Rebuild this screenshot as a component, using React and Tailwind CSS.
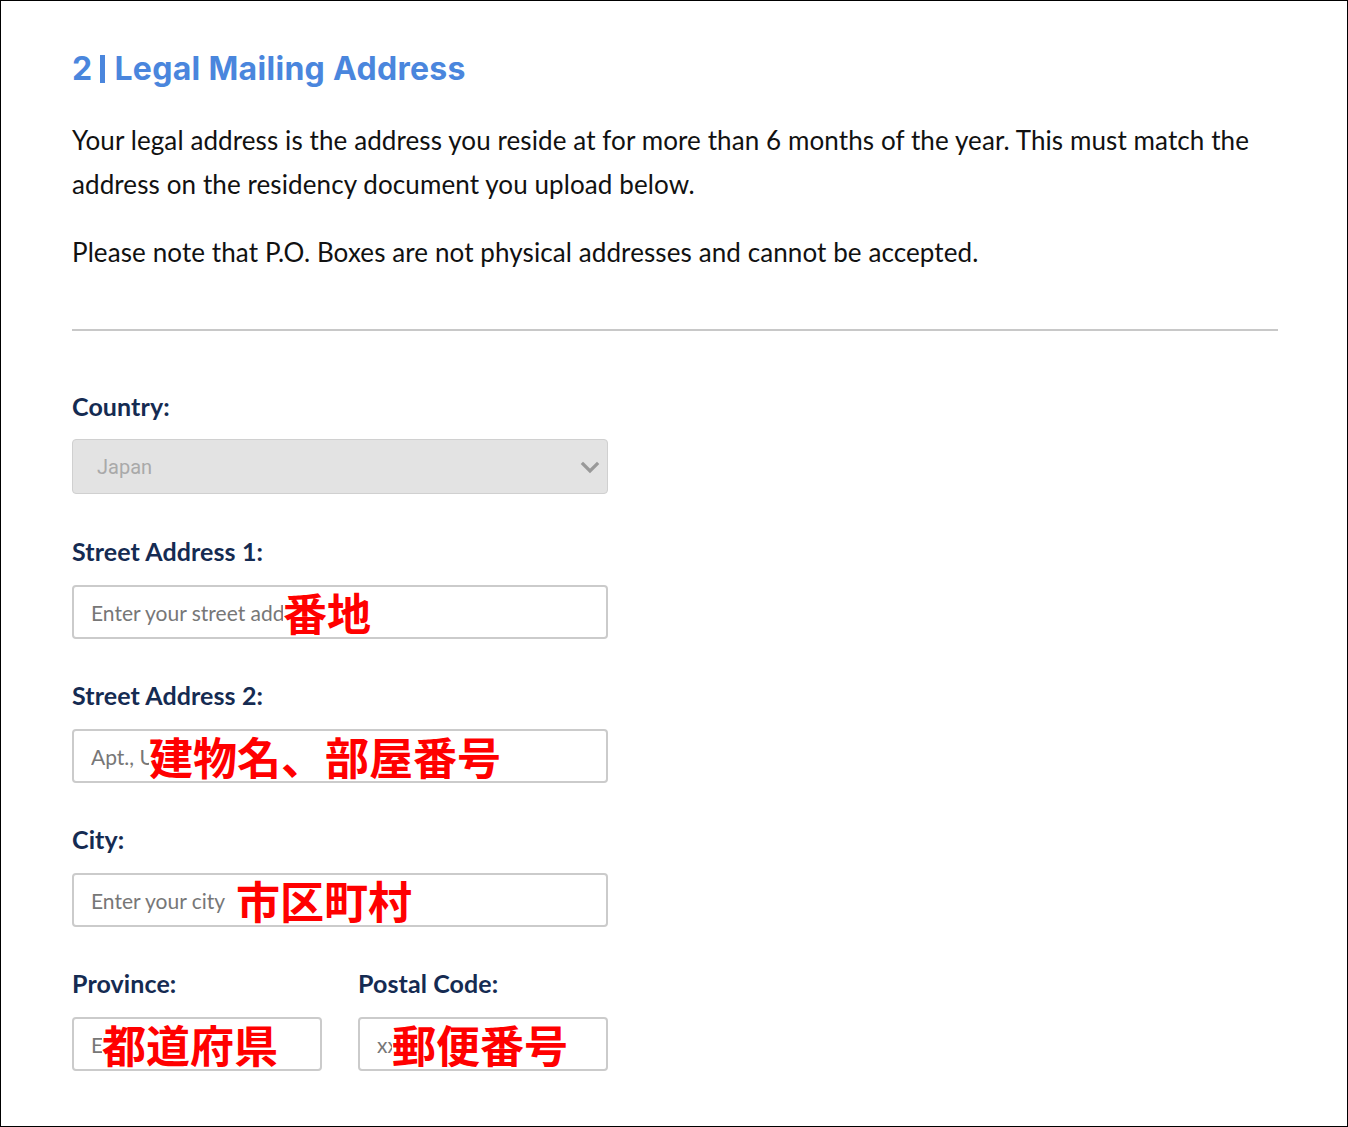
import React from "react";

const lato = { fontFamily: "Lato, 'Noto Sans', sans-serif" };

function Label({ children }) {
  return (
    <div className="text-[25px] font-bold leading-[28px] tracking-[0.1px] text-[#152b52]" style={lato}>
      {children}
    </div>
  );
}

function Overlay({ left, children }) {
  return (
    <span
      className="absolute top-1/2 -translate-y-1/2 bg-white text-[44px] font-bold leading-[48px] text-[#ff0000]"
      style={{ left, fontFamily: "'Noto Sans CJK JP', sans-serif" }}
    >
      {children}
    </span>
  );
}

function TextInput({ placeholder, overlay, overlayLeft, widthClass = "w-[536px]" }) {
  return (
    <div className={`relative ${widthClass} h-[54px]`}>
      <input
        type="text"
        placeholder={placeholder}
        className="box-border h-full w-full rounded-[4px] border-2 border-[#cbcbcb] bg-white px-[17px] text-[21px] text-[#333] outline-none placeholder:text-[#777]"
        style={lato}
      />
      {overlay && <Overlay left={overlayLeft}>{overlay}</Overlay>}
    </div>
  );
}

export default function App() {
  return (
    <div className="box-border h-[1127px] w-[1348px] border border-black bg-white">
      <div className="pl-[71px] pr-[69px] pt-[48px]">
        <h2
          className="text-[32px] font-bold leading-[40px] tracking-[0.3px] text-[#4a86dd]"
          style={{ fontFamily: "Inter, 'Open Sans', sans-serif" }}
        >
          2<span className="ml-[8px] mr-[9px] inline-block h-[28px] w-[5px] translate-y-[3px] bg-[#4a86dd] align-baseline" />Legal Mailing Address
        </h2>
        <div className="mt-[29px] text-[26px] leading-[44px] tracking-[0.1px] text-[#111]" style={lato}>
          <p>
            Your legal address is the address you reside at for more than 6 months of the year. This must match the
            address on the residency document you upload below.
          </p>
          <p className="mt-[24px]">Please note that P.O. Boxes are not physical addresses and cannot be accepted.</p>
        </div>
        <div className="mt-[55px] h-[2px] w-[1206px] bg-[#c8c8c8]" />

        <div className="mt-[61px]">
          <Label>Country:</Label>
          <div className="mt-[19px] box-border flex h-[55px] w-[536px] items-center justify-between rounded-[4px] border border-[#d0d0d0] bg-[#e3e3e3] pl-[24px] pr-[6px]">
            <span className="text-[20px] text-[#a9a9a9]" style={{ fontFamily: "Roboto, sans-serif" }}>
              Japan
            </span>
            <svg width="22" height="22" viewBox="0 0 22 22" fill="none">
              <path d="M4 8 L11 15 L18 8" stroke="#999" strokeWidth="3.2" strokeLinecap="square" strokeLinejoin="miter" />
            </svg>
          </div>
        </div>

        <div className="mt-[43px]">
          <Label>Street Address 1:</Label>
          <div className="mt-[20px]">
            <TextInput placeholder="Enter your street address" overlay="番地" overlayLeft="211px" />
          </div>
        </div>

        <div className="mt-[42px]">
          <Label>Street Address 2:</Label>
          <div className="mt-[20px]">
            <TextInput placeholder="Apt., Unit, Suite, etc." overlay="建物名、部屋番号" overlayLeft="77px" />
          </div>
        </div>

        <div className="mt-[42px]">
          <Label>City:</Label>
          <div className="mt-[20px]">
            <TextInput placeholder="Enter your city" overlay="市区町村" overlayLeft="164px" />
          </div>
        </div>

        <div className="mt-[42px] flex gap-[36px]">
          <div>
            <Label>Province:</Label>
            <div className="mt-[20px]">
              <TextInput
                placeholder="Enter your province"
                overlay="都道府県"
                overlayLeft="30px"
                widthClass="w-[250px]"
              />
            </div>
          </div>
          <div>
            <Label>Postal Code:</Label>
            <div className="mt-[20px]">
              <TextInput placeholder="xxx-xxxx" overlay="郵便番号" overlayLeft="34px" widthClass="w-[250px]" />
            </div>
          </div>
        </div>
      </div>
    </div>
  );
}
